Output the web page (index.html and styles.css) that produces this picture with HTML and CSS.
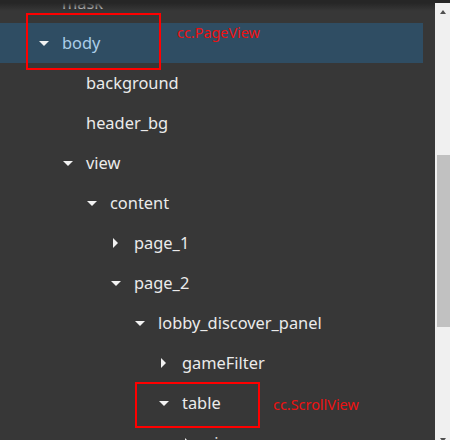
FILE: index.html
```html
<!DOCTYPE html>
<html>
<head>
<meta charset="utf-8">
<link rel="stylesheet" href="styles.css">
</head>
<body>
<div class="screen">
  <div class="topbar"></div>
  <div class="main">
    <div class="pane">
      <ul class="tree">
        <li class="row lv0"><span class="tw none"></span><span class="label">mask</span></li>
        <li class="row lv0 selected"><span class="tw down"></span><span class="label">body</span></li>
        <li class="row lv1"><span class="tw none"></span><span class="label">background</span></li>
        <li class="row lv1"><span class="tw none"></span><span class="label">header_bg</span></li>
        <li class="row lv1"><span class="tw down"></span><span class="label">view</span></li>
        <li class="row lv2"><span class="tw down"></span><span class="label">content</span></li>
        <li class="row lv3"><span class="tw right"></span><span class="label">page_1</span></li>
        <li class="row lv3"><span class="tw down"></span><span class="label">page_2</span></li>
        <li class="row lv4"><span class="tw down"></span><span class="label">lobby_discover_panel</span></li>
        <li class="row lv5"><span class="tw right"></span><span class="label">gameFilter</span></li>
        <li class="row lv5"><span class="tw down"></span><span class="label">table</span></li>
        <li class="row lv6"><span class="tw right"></span><span class="label">view</span></li>
      </ul>
      <div class="shadow"></div>
      <div class="mark mark-body"></div>
      <div class="note note-body">cc.PageView</div>
      <div class="mark mark-table"></div>
      <div class="note note-table">cc.ScrollView</div>
    </div>
    <div class="scrollbar">
      <div class="sb-btn"><span class="arrow up"></span></div>
      <div class="sb-track"><div class="sb-thumb"></div></div>
      <div class="sb-btn"><span class="arrow dn"></span></div>
    </div>
  </div>
</div>
</body>
</html>
```

FILE: styles.css
```css
html, body {
  margin: 0;
  padding: 0;
  background: #373737;
}
.screen {
  width: 450px;
  height: 440px;
  overflow: hidden;
  display: flex;
  flex-direction: column;
  background: #373737;
}
.topbar {
  height: 3px;
  flex: none;
  background: #262626;
}
.main {
  display: flex;
  flex: none;
  height: 450px;
}
.pane {
  position: relative;
  width: 435px;
  height: 437px;
  overflow: hidden;
  background: #373737;
}
.tree {
  list-style: none;
  margin: -20px 0 0 0;
  padding: 0;
  width: 423px;
}
.row {
  height: 40px;
  display: flex;
  align-items: center;
  font-family: "Noto Sans", "Open Sans", sans-serif;
  font-size: 16.4px;
  color: #ebebeb;
}
.row.selected {
  background: #2f4d63;
  color: #abcde9;
}
.lv0 { padding-left: 39px; }
.lv1 { padding-left: 63px; }
.lv2 { padding-left: 87px; }
.lv3 { padding-left: 111px; }
.lv4 { padding-left: 135px; }
.lv5 { padding-left: 159px; }
.lv6 { padding-left: 183px; }
.tw {
  width: 10px;
  height: 10px;
  margin-right: 13px;
  flex: none;
  position: relative;
}
.tw.down::before {
  content: "";
  position: absolute;
  left: 0;
  top: 3px;
  border-left: 5px solid transparent;
  border-right: 5px solid transparent;
  border-top: 5px solid #f2f2f2;
}
.tw.right::before {
  content: "";
  position: absolute;
  left: 2px;
  top: 0;
  border-top: 5px solid transparent;
  border-bottom: 5px solid transparent;
  border-left: 5px solid #f2f2f2;
}
.label {
  line-height: 20px;
  white-space: nowrap;
}
.shadow {
  position: absolute;
  left: 0;
  top: 0;
  width: 100%;
  height: 8px;
  background: linear-gradient(#262626, rgba(55, 55, 55, 0));
}
.mark {
  position: absolute;
  border: 2px solid #ff0000;
  box-sizing: border-box;
}
.mark-body {
  left: 26px;
  top: 10px;
  width: 135px;
  height: 57px;
}
.mark-table {
  left: 135px;
  top: 379px;
  width: 125px;
  height: 46px;
}
.note {
  position: absolute;
  font-family: "Noto Sans", sans-serif;
  font-size: 14.4px;
  line-height: 18px;
  color: #ee1111;
}
.note-body {
  left: 177px;
  top: 21px;
}
.note-table {
  left: 273px;
  top: 393px;
}
.scrollbar {
  width: 15px;
  height: 446px;
  flex: none;
  display: flex;
  flex-direction: column;
  background: #f0f0f0;
}
.sb-btn {
  height: 17px;
  flex: none;
  position: relative;
}
.arrow {
  position: absolute;
  left: 5px;
}
.arrow.up {
  top: 7px;
  border-left: 3.5px solid transparent;
  border-right: 3.5px solid transparent;
  border-bottom: 4px solid #505050;
}
.arrow.dn {
  top: 6px;
  border-left: 3.5px solid transparent;
  border-right: 3.5px solid transparent;
  border-top: 4px solid #505050;
}
.sb-track {
  flex: 1;
}
.sb-thumb {
  margin-top: 135px;
  margin-left: 2px;
  width: 13px;
  height: 172px;
  background: #c1c1c1;
}
```
